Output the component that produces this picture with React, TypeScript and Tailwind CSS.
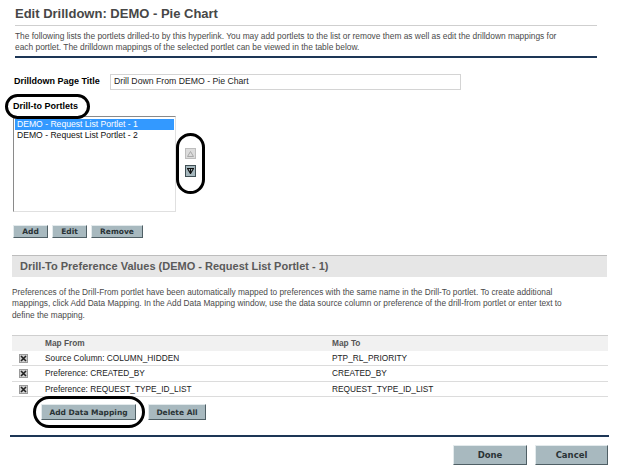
import React from 'react';

const Btn = ({
  children,
  className = '',
}: {
  children: React.ReactNode;
  className?: string;
}) => (
  <button
    className={`flex items-center justify-center bg-[#a8b9bf] border border-t-[#e3eaec] border-l-[#e3eaec] border-r-[#4f5f65] border-b-[#4f5f65] font-['DejaVu_Sans',sans-serif] font-bold text-[#2a3336] ${className}`}
  >
    {children}
  </button>
);

const XIcon = () => (
  <span className="flex items-center justify-center w-[9px] h-[9px] bg-[#cfcfcf] border border-[#9a9a9a]">
    <svg width="7" height="7" viewBox="0 0 7 7">
      <path d="M1 1 L6 6 M6 1 L1 6" stroke="#222" strokeWidth="1.6" />
    </svg>
  </span>
);

const rows = [
  { from: 'Source Column: COLUMN_HIDDEN', to: 'PTP_RL_PRIORITY' },
  { from: 'Preference: CREATED_BY', to: 'CREATED_BY' },
  { from: 'Preference: REQUEST_TYPE_ID_LIST', to: 'REQUEST_TYPE_ID_LIST' },
];

export default function App() {
  return (
    <div className="relative w-[619px] h-[470px] overflow-hidden bg-white font-['Liberation_Sans',Arial,sans-serif] text-[#333]">
      {/* Header */}
      <div className="pl-[15px] pr-[22px] pt-[6px]">
        <h1 className="text-[13px] font-bold text-[#474747] leading-[16px] pb-[3px] border-b border-[#cfcfcf]">
          Edit Drilldown: DEMO - Pie Chart
        </h1>
        <p className="text-[8.4px] leading-[11px] text-[#4a4a4a] pt-[5px] pb-[3px] border-b-2 border-[#1d3656] whitespace-nowrap">
          The following lists the portlets drilled-to by this hyperlink. You may add portlets to the list or remove them as well as edit the drilldown mappings for
          <br />
          each portlet. The drilldown mappings of the selected portlet can be viewed in the table below.
        </p>
      </div>

      {/* Page title */}
      <div className="flex items-center pl-[14px] mt-[16px]">
        <span className="w-[96px] text-[9px] font-bold text-black">Drilldown Page Title</span>
        <div className="w-[351px] h-[16px] border border-[#d4d4d4] flex items-center pl-[3px] text-[8.7px] text-[#222]">
          Drill Down From DEMO - Pie Chart
        </div>
      </div>

      {/* Drill-to portlets */}
      <div className="pl-[13px] mt-[11px] text-[9px] leading-[10px] font-bold text-black">Drill-to Portlets</div>
      <div className="flex pl-[13px] mt-[5px]">
        <div className="w-[163px] h-[96px] border border-t-[#8a8a8a] border-l-[#8a8a8a] border-r-[#e0e0e0] border-b-[#e0e0e0] pt-[2px] px-[1px] text-[8.6px] leading-[11px]">
          <div className="bg-[#3399ff] text-white pl-[2px]">DEMO - Request List Portlet - 1</div>
          <div className="text-[#111] pl-[2px]">DEMO - Request List Portlet - 2</div>
        </div>
        <div className="flex flex-col gap-[6px] ml-[9px] mt-[32px]">
          <span className="flex items-center justify-center w-[11px] h-[11px] bg-[#dcdcdc] border border-[#bdbdbd]">
            <svg width="7" height="6" viewBox="0 0 7 6">
              <path d="M3.5 0.5 L6.5 5.5 L0.5 5.5 Z" fill="none" stroke="#a9a9a9" strokeWidth="1" />
            </svg>
          </span>
          <span className="flex items-center justify-center w-[11px] h-[12px] bg-[#a5b7bd] border border-[#3f4e53]">
            <svg width="7" height="6" viewBox="0 0 7 6">
              <path d="M0.5 0.5 L6.5 0.5 L3.5 5.5 Z" fill="none" stroke="#111" strokeWidth="1.2" />
              <path d="M3.5 1 L3.5 4" stroke="#111" strokeWidth="1" />
            </svg>
          </span>
        </div>
      </div>

      <div className="flex gap-[4px] pl-[13px] mt-[13px]">
        <Btn className="w-[35px] h-[13px] text-[7.5px]">Add</Btn>
        <Btn className="w-[35px] h-[13px] text-[7.5px]">Edit</Btn>
        <Btn className="w-[52px] h-[13px] text-[7.5px]">Remove</Btn>
      </div>

      {/* Preference values */}
      <div className="ml-[12px] w-[595px] h-[22px] mt-[17px] border-t border-[#bdbdbd] bg-[#e6e6e6] flex items-center pl-[8px] text-[11px] font-bold text-[#5a5a5a]">
        Drill-To Preference Values (DEMO - Request List Portlet - 1)
      </div>
      <p className="pl-[12px] mt-[10px] text-[8.3px] leading-[11.3px] text-[#4a4a4a] whitespace-nowrap">
        Preferences of the Drill-From portlet have been automatically mapped to preferences with the same name in the Drill-To portlet. To create additional
        <br />
        mappings, click Add Data Mapping. In the Add Data Mapping window, use the data source column or preference of the drill-from portlet or enter text to
        <br />
        define the mapping.
      </p>

      <div className="ml-[12px] w-[596px] mt-[14px] text-[8.3px] text-[#222]">
        <div className="flex items-center h-[16px] bg-[#f1f1f1] border-t border-[#cfcfcf] text-[#555] font-bold">
          <span className="w-[33px]" />
          <span className="w-[287px]">Map From</span>
          <span>Map To</span>
        </div>
        {rows.map((r) => (
          <div key={r.from} className="flex items-center h-[15.5px] border-b border-[#dcdcdc]">
            <span className="w-[33px] pl-[7px]">
              <XIcon />
            </span>
            <span className="w-[287px]">{r.from}</span>
            <span>{r.to}</span>
          </div>
        ))}
      </div>

      <div className="flex gap-[12px] pl-[41px] mt-[7px]">
        <Btn className="w-[95px] h-[16px] text-[7.5px]">Add Data Mapping</Btn>
        <Btn className="w-[58px] h-[16px] text-[7.5px]">Delete All</Btn>
      </div>

      <div className="ml-[10px] w-[599px] mt-[15px] border-t-2 border-[#1d3656]" />

      <div className="flex justify-end gap-[8px] pr-[11px] mt-[8px]">
        <Btn className="w-[74px] h-[20px] text-[8.5px]">Done</Btn>
        <Btn className="w-[73px] h-[20px] text-[8.5px]">Cancel</Btn>
      </div>

      {/* annotation ellipses */}
      <div className="absolute left-[5px] top-[94px] w-[85px] h-[25px] rounded-full border-[3px] border-black" />
      <div className="absolute left-[176px] top-[133px] w-[29px] h-[61px] rounded-full border-[3px] border-black" />
      <div className="absolute left-[33px] top-[396px] w-[112px] h-[32px] rounded-full border-[3px] border-black" />
    </div>
  );
}
